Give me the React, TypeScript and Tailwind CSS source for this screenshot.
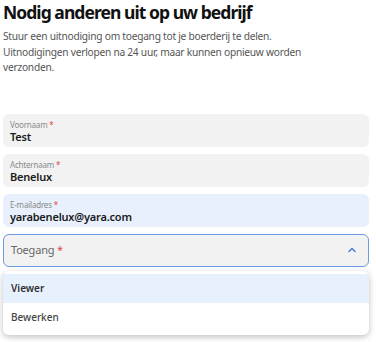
import React from 'react';

const Field = ({ label, value, active }: { label: string; value: string; active?: boolean }) => (
  <div className={`rounded-md px-[7px] pt-[6px] pb-[5px] h-[33px] ${active ? 'bg-[#e8f0fd]' : 'bg-[#f2f2f2]'}`}>
    <div className="text-[8px] leading-[10px] text-[#8a8a8a] tracking-[-0.2px]">
      {label} <span className="text-[#e0474c]">*</span>
    </div>
    <div className="text-[11px] leading-[13px] font-semibold text-[#1a1a1a] tracking-[-0.2px]">{value}</div>
  </div>
);

const App = () => {
  return (
    <div className="w-[376px] h-[342px] bg-white overflow-hidden font-['Noto_Sans',sans-serif]">
      <div className="px-[3px] pt-[1px]">
        <h1 className="text-[17.5px] leading-[22px] font-bold text-[#111] tracking-[-0.95px]">Nodig anderen uit op uw bedrijf</h1>
        <p className="mt-[6px] w-[330px] text-[10.2px] leading-[15.5px] text-[#555] tracking-[-0.25px]">
          Stuur een uitnodiging om toegang tot je boerderij te delen.
          <br />
          Uitnodigingen verlopen na 24 uur, maar kunnen opnieuw worden verzonden.
        </p>
        <div className="mt-[38px] w-[366px] flex flex-col gap-[7px]">
          <Field label="Voornaam" value="Test" />
          <Field label="Achternaam" value="Benelux" />
          <Field label="E-mailadres" value="yarabenelux@yara.com" active />
          <div className="relative">
            <div className="h-[33px] rounded-md border border-[#6b9be0] bg-[#f2f2f2] flex items-center justify-between px-[7px]">
              <span className="text-[11px] text-[#666] tracking-[-0.2px]">
                Toegang <span className="text-[#e0474c]">*</span>
              </span>
              <svg width="10" height="10" viewBox="0 0 10 10" className="mr-[4px]">
                <path d="M2 6.5 L5 3.5 L8 6.5" fill="none" stroke="#3b78d8" strokeWidth="1.4" strokeLinecap="round" strokeLinejoin="round" />
              </svg>
            </div>
            <div className="absolute left-0 right-0 top-[37px] bg-white rounded-md shadow-[0_2px_6px_rgba(0,0,0,0.25)] py-[3px]">
              <div className="h-[29px] bg-[#e6f1fd] flex items-center px-[8px] text-[10px] font-semibold text-[#333]">Viewer</div>
              <div className="h-[29px] flex items-center px-[8px] text-[10px] font-medium text-[#444]">Bewerken</div>
            </div>
          </div>
        </div>
      </div>
    </div>
  );
};

export default App;
